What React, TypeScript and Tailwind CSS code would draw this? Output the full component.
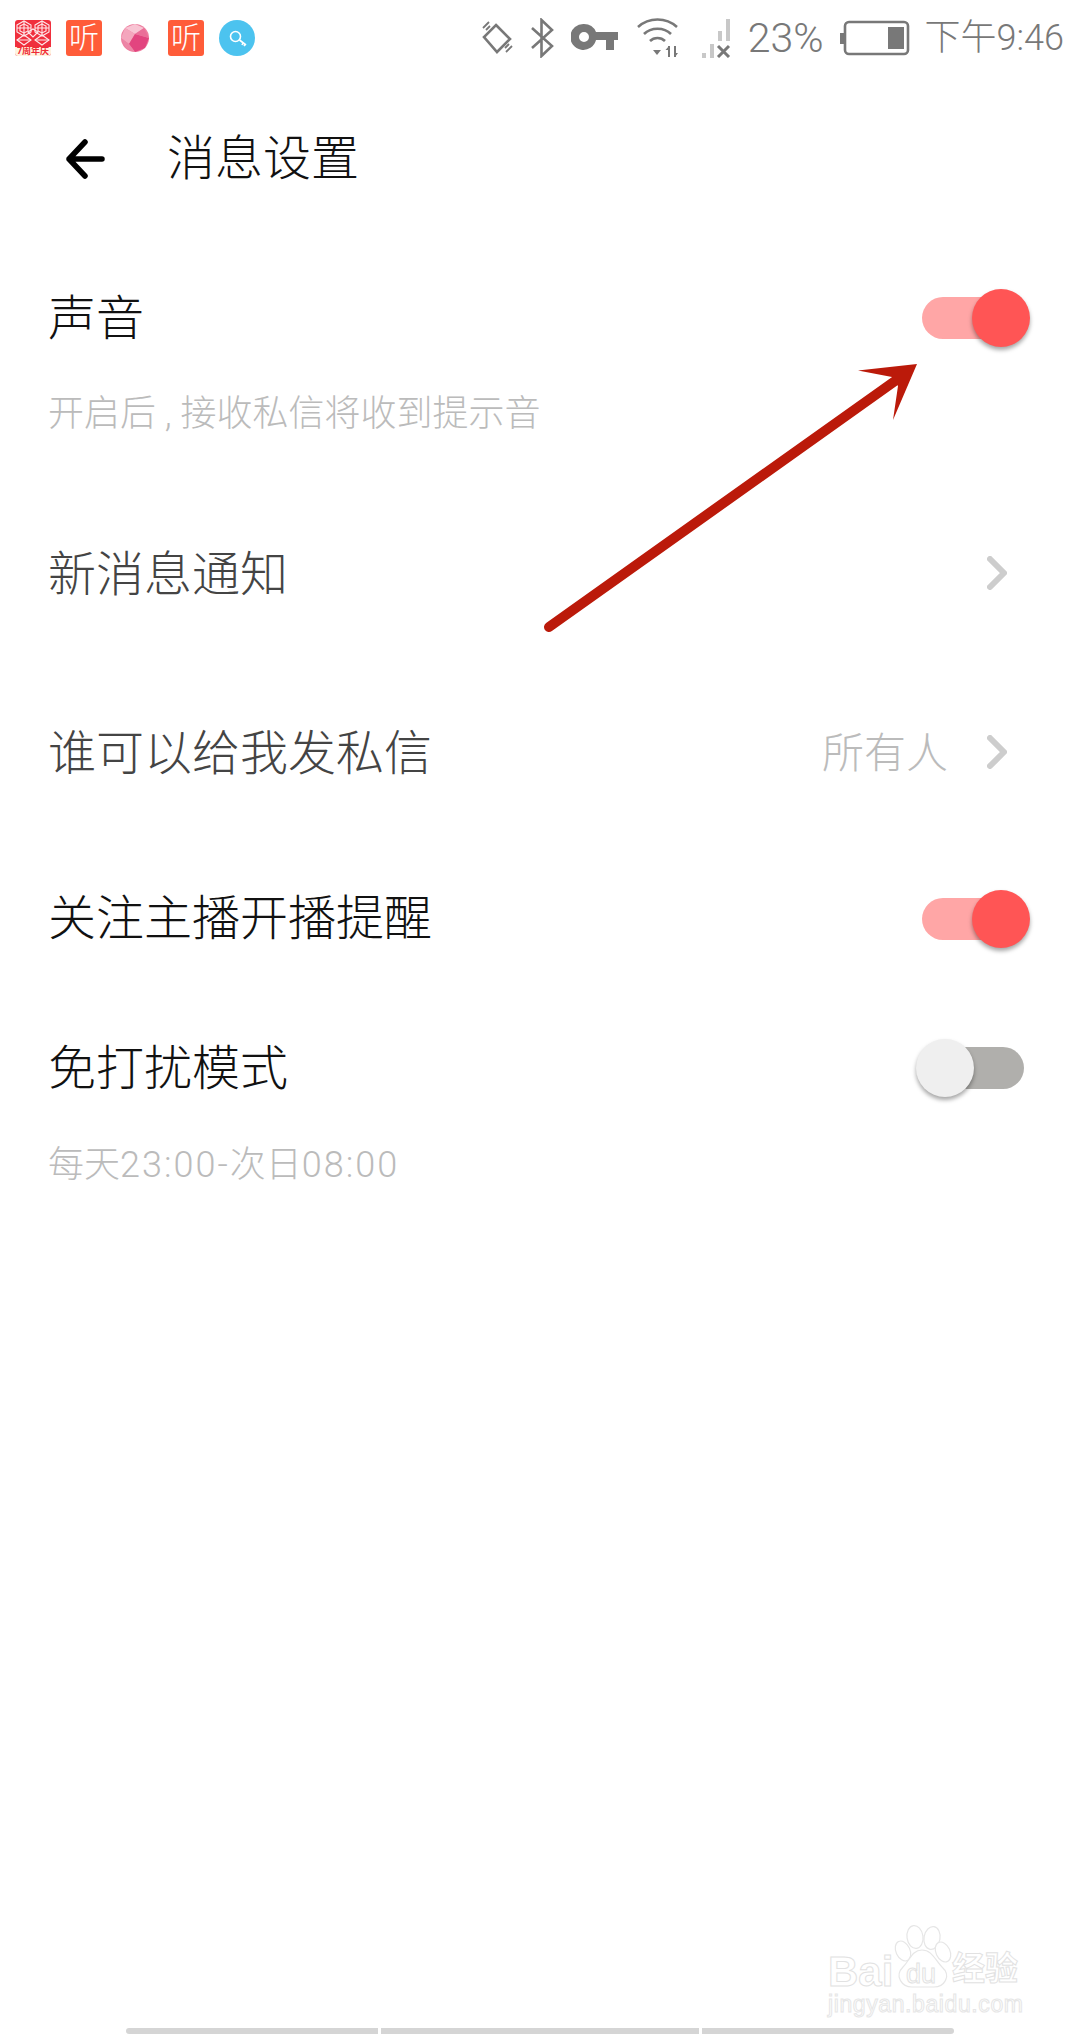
function Toggle({ on }: { on: boolean }) {
  return (
    <div className={`relative h-[42px] w-[102px] rounded-full ${on ? 'bg-[#ffa6a6]' : 'bg-[#b0afac]'}`}>
      <div
        className={`absolute top-[-8px] h-[58px] w-[58px] rounded-full shadow-[0_3px_4px_rgba(0,0,0,0.35)] ${
          on ? 'right-[-6px] bg-[#ff5555]' : 'left-[-6px] bg-[#efefef]'
        }`}
      />
    </div>
  )
}

function Listen() {
  return (
    <div className="flex h-[36px] w-[36px] items-center justify-center rounded-[3px] bg-[#ff5c39] text-[30px] leading-none text-white">
      听
    </div>
  )
}

function NotificationIcons() {
  return (
    <div className="flex items-center gap-[15px]">
      <div className="relative h-[36px] w-[36px] overflow-hidden rounded-[3px] bg-[#f0303e]">
        <svg viewBox="0 0 36 27" className="h-[27px] w-[36px]">
          <g fill="none" stroke="#fff" strokeWidth="1.1" opacity="0.9">
            <path d="M2 5 L9 1 L16 5 L16 12 L9 16 L2 12 Z" />
            <path d="M20 5 L27 1 L34 5 L34 12 L27 16 L20 12 Z" />
            <path d="M5 6 L9 4 L13 6 L13 11 L9 13 L5 11 Z" />
            <path d="M23 6 L27 4 L31 6 L31 11 L27 13 L23 11 Z" />
            <path d="M2 20 L9 15 L16 20 L9 25 Z" />
            <path d="M20 20 L27 15 L34 20 L27 25 Z" />
            <path d="M13 12 L18 9 L23 12 L18 17 Z" />
            <path d="M9 1 L9 16 M27 1 L27 16 M2 8 L16 8 M20 8 L34 8 M2 20 L16 20 M20 20 L34 20" />
          </g>
        </svg>
        <div className="absolute bottom-0 left-0 h-[9px] w-[36px] bg-[#fff3e0] text-center text-[9px] font-bold leading-[9px] text-[#ef2b36]">
          7周年庆
        </div>
      </div>
      <Listen />
      <svg viewBox="0 0 36 36" className="h-[36px] w-[36px]">
        <circle cx="18" cy="18" r="14" fill="#ee7fa0" />
        <path d="M8 8 L18 4 L27 8 L18 14 Z" fill="#f8c4d3" />
        <path d="M4 18 L8 8 L18 14 L12 24 Z" fill="#f4a6bd" />
        <path d="M18 14 L32 18 L28 28 L18 32 L12 24 Z" fill="#e2457f" />
        <path d="M27 8 L32 18 L18 14 Z" fill="#ea6f98" />
        <path d="M4 18 L12 24 L18 32 L9 28 Z" fill="#ec86a6" />
      </svg>
      <Listen />
      <div className="flex h-[36px] w-[36px] items-center justify-center rounded-full bg-[#4cc3ef]">
        <svg viewBox="0 0 36 36" className="h-[36px] w-[36px]" fill="none" stroke="#fff" strokeWidth="1.6">
          <circle cx="16.5" cy="16.5" r="5" />
          <path d="M20.5 20 L27 25 M24 23 L23 25 M26 24.5 L25 26" />
        </svg>
      </div>
    </div>
  )
}

function StatusIcons() {
  return (
    <div className="flex items-center text-[#787878]">
      <svg viewBox="0 0 33 38" className="h-[38px] w-[33px]" fill="none" stroke="currentColor">
        <path d="M15 7 L29 21 L16 34 L3 19 Z" strokeWidth="2.6" transform="translate(0 -1)" />
        <path d="M2 9 L8 3 M5 11 L9 7 M31 27 L25 33 M28 25 L24 29" strokeWidth="1.8" />
      </svg>
      <svg viewBox="0 0 23 40" className="ml-[17px] h-[40px] w-[23px]" fill="none" stroke="currentColor" strokeWidth="2.6">
        <path d="M1 10 L21 28 L10.5 38 L10.5 2 L21 12 L1 30" />
      </svg>
      <svg viewBox="0 0 47 30" className="ml-[17px] h-[30px] w-[47px]" fill="currentColor">
        <path d="M13 1 A13 13 0 0 1 25 9 L47 9 L47 17 L43 17 L43 27 L35 27 L35 17 L25 17 A13 13 0 1 1 13 1 Z M13 9 A5 5 0 1 0 13 19 A5 5 0 1 0 13 9 Z" fillRule="evenodd" />
      </svg>
      <svg viewBox="0 0 41 40" className="ml-[19px] h-[40px] w-[41px]" fill="none" stroke="currentColor" strokeWidth="2.6">
        <path d="M1 9 C12 -1 29 -1 40 9" />
        <path d="M7 16 C14 9 27 9 34 16" />
        <path d="M13 23 C17 19 24 19 28 23" />
        <path d="M16 32 L24 32 L20 37 Z" fill="currentColor" stroke="none" />
        <path d="M32 28 L32 39 M38 28 L38 39" strokeWidth="2" />
        <path d="M28.5 32 L32 28 L32 32 Z M38 39 L41 35 L38 35 Z" fill="currentColor" stroke="none" />
      </svg>
      <svg viewBox="0 0 29 40" className="ml-[24px] h-[40px] w-[29px]">
        <rect x="0" y="35" width="4" height="5" fill="#c8c8c8" />
        <rect x="8" y="26" width="4" height="14" fill="#c8c8c8" />
        <rect x="16" y="13" width="4" height="10" fill="#c8c8c8" />
        <rect x="24" y="1" width="4" height="22" fill="#c8c8c8" />
        <path d="M16 28 L27 39 M27 28 L16 39" stroke="#787878" strokeWidth="3" />
      </svg>
      <span className="ml-[17px] text-[41px] font-light leading-none">23%</span>
      <svg viewBox="0 0 70 36" className="ml-[16px] h-[36px] w-[70px]" fill="none">
        <rect x="0" y="13" width="4" height="11" fill="currentColor" />
        <rect x="5" y="2" width="63" height="32" rx="4" stroke="currentColor" strokeWidth="2.6" />
        <rect x="48" y="7" width="16" height="22" fill="currentColor" />
      </svg>
      <span className="ml-[15px] text-[36px] font-light leading-none">下午9:46</span>
    </div>
  )
}

function Chevron() {
  return (
    <svg viewBox="0 0 20 34" className="h-[34px] w-[20px]" fill="none" stroke="#cdcdcd" strokeWidth="6" strokeLinecap="round" strokeLinejoin="round">
      <path d="M3 3 L17 17 L3 31" />
    </svg>
  )
}

function BaiduMark() {
  return (
    <div className="pointer-events-none absolute left-[828px] top-[1922px] h-[96px] w-[200px] text-white">
      <svg viewBox="0 0 200 70" className="absolute left-0 top-0 h-[70px] w-[200px]" fill="#fff" stroke="#e6e6e6" strokeWidth="1.2">
        <ellipse cx="87" cy="15" rx="8" ry="11.5" transform="rotate(-8 87 15)" />
        <ellipse cx="104" cy="16" rx="8" ry="11.5" transform="rotate(10 104 16)" />
        <ellipse cx="75" cy="29" rx="7" ry="10.5" transform="rotate(-25 75 29)" />
        <ellipse cx="115" cy="30" rx="7" ry="10.5" transform="rotate(-25 115 30)" />
        <path d="M94 28 C84 28 82 38 75 45 C66 54 74 65 84 65 L106 65 C116 65 124 54 114 45 C107 38 104 28 94 28 Z" />
      </svg>
      <span className="absolute left-0 top-[29px] font-['Liberation_Sans',sans-serif] text-[42px] font-bold leading-none [-webkit-text-stroke:1px_#e2e2e2]">
        Bai
      </span>
      <span className="absolute left-[78px] top-[39px] font-['Liberation_Sans',sans-serif] text-[27px] font-normal leading-none [-webkit-text-stroke:1px_#e2e2e2]">
        du
      </span>
      <span className="absolute left-[124px] top-[30px] text-[33px] font-bold leading-none [-webkit-text-stroke:1px_#e2e2e2]">
        经验
      </span>
      <div className="absolute left-0 top-[71px] font-['Liberation_Sans',sans-serif] text-[23px] leading-none tracking-[0.6px] [-webkit-text-stroke:1px_#e6e6e6]">
        jingyan.baidu.com
      </div>
    </div>
  )
}

export default function App() {
  return (
    <div
      lang="zh-CN"
      className="relative flex h-[2040px] w-[1080px] flex-col overflow-hidden bg-white font-[Roboto,'Noto_Sans_CJK_SC',sans-serif] font-light text-[48px] leading-none text-[#111]"
    >
      <div className="flex h-[76px] shrink-0 items-center justify-between pl-[15px] pr-[16px]">
        <NotificationIcons />
        <StatusIcons />
      </div>

      <div className="flex h-[164px] shrink-0 items-center pl-[65px]">
        <svg viewBox="0 0 42 42" className="mt-[2px] h-[42px] w-[42px]" fill="none" stroke="#000" strokeWidth="5.5" strokeLinecap="round" strokeLinejoin="round">
          <path d="M37 21 L4 21 M20 4 L4 21 L20 38" />
        </svg>
        <span className="ml-[60px] pt-[2px] text-[48px]">消息设置</span>
      </div>

      <div className="flex h-[152px] shrink-0 items-center justify-between pl-[48px] pr-[56px]">
        <span className="pt-[5px]">声音</span>
        <div className="mt-[3px]">
          <Toggle on />
        </div>
      </div>
      <div className="flex h-[44px] shrink-0 items-center pl-[48px] text-[36px] text-[#bbbbbb]">开启后 , 接收私信将收到提示音</div>

      <div className="mt-[47px] flex h-[180px] shrink-0 items-center justify-between pl-[48px] pr-[73px] text-[#444]">
        <span className="pt-[4px]">新消息通知</span>
        <Chevron />
      </div>
      <div className="flex h-[178px] shrink-0 items-center justify-between pl-[48px] pr-[73px] text-[#444]">
        <span className="pt-[4px]">谁可以给我发私信</span>
        <div className="flex items-center gap-[39px] text-[42px] text-[#bbbbbb]">
          <span className="pt-[4px]">所有人</span>
          <Chevron />
        </div>
      </div>
      <div className="flex h-[156px] shrink-0 items-center justify-between pl-[48px] pr-[56px]">
        <span>关注主播开播提醒</span>
        <Toggle on />
      </div>
      <div className="flex h-[140px] shrink-0 items-center justify-between pl-[48px] pr-[56px]">
        <span className="pt-[3px]">免打扰模式</span>
        <div className="mt-[2px]">
          <Toggle on={false} />
        </div>
      </div>
      <div className="flex h-[56px] shrink-0 items-center pl-[48px] text-[36px] text-[#bbbbbb]">
        每天<span className="tracking-[2px]">23:00-</span>次日<span className="tracking-[2px]">08:00</span>
      </div>

      <div className="mb-[6px] ml-[126px] mt-auto flex gap-[3px]">
        <div className="h-[6px] w-[252px] rounded-l-full bg-[#d5d5d5]" />
        <div className="h-[6px] w-[318px] bg-[#d5d5d5]" />
        <div className="h-[6px] w-[252px] rounded-r-full bg-[#d5d5d5]" />
      </div>

      <BaiduMark />

      {/* annotation drawn on top of the screenshot */}
      <svg viewBox="0 0 1080 2040" className="pointer-events-none absolute left-0 top-0 h-[2040px] w-[1080px]">
        <path d="M549 627 L895 381" stroke="#bb1a0a" strokeWidth="10" strokeLinecap="round" />
        <path d="M917 364 L858 370.5 L892 377 L898 386 L893 420 Z" fill="#bb1a0a" />
      </svg>
    </div>
  )
}
